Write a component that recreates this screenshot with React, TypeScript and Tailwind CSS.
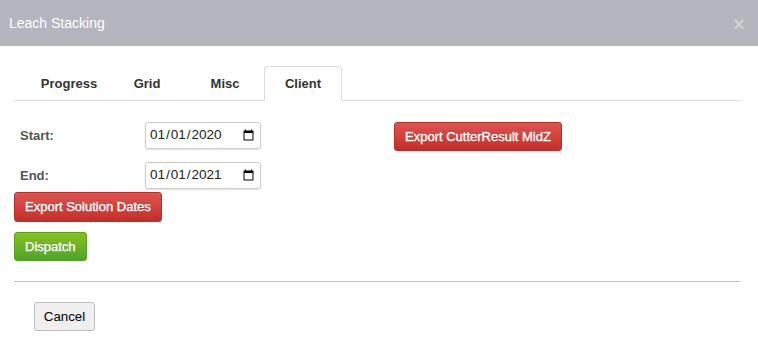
import { useState } from "react";

const tabs = ["Progress", "Grid", "Misc", "Client"];

export default function App() {
  const [active, setActive] = useState("Client");
  const [start, setStart] = useState("2020-01-01");
  const [end, setEnd] = useState("2021-01-01");

  return (
    <div className="w-[758px] h-[362px] bg-white font-['Liberation_Sans',Arial,sans-serif] text-[#333]">
      {/* header */}
      <div className="h-[46px] bg-[#b3b6bd] flex items-center justify-between pl-[9px] pr-[13px]">
        <span className="text-[14px] text-white">Leach Stacking</span>
        <span className="text-[20px] font-bold leading-none text-[#cdd0d5] mt-[2px]">×</span>
      </div>

      <div className="pl-[14px] pr-[18px]">
        {/* tabs */}
        <div className="flex pl-[16px] pt-[20px] border-b border-[#dcdcdc]">
          {tabs.map((t) => (
            <button
              key={t}
              onClick={() => setActive(t)}
              className={
                "w-[78px] h-[35px] -mb-px text-[13px] font-bold text-[#333] rounded-t-[4px] border " +
                (active === t
                  ? "bg-white border-[#dcdcdc] border-b-white"
                  : "border-transparent")
              }
            >
              {t}
            </button>
          ))}
        </div>

        {/* client form */}
        <div className="flex pt-[21px] h-[181px] border-b border-[#bdbdbd]">
          <div className="w-[380px]">
            <div className="flex items-center">
              <label className="w-[131px] pl-[6px] text-[13px] font-bold text-[#555]">Start:</label>
              <input
                type="date"
                value={start}
                onChange={(e) => setStart(e.target.value)}
                className="w-[116px] h-[27px] px-[3px] text-[13.5px] text-[#222] border border-[#ccc] rounded-[3px] shadow-[0_1px_2px_rgba(0,0,0,0.12)]"
              />
            </div>
            <div className="flex items-center mt-[13px]">
              <label className="w-[131px] pl-[6px] text-[13px] font-bold text-[#555]">End:</label>
              <input
                type="date"
                value={end}
                onChange={(e) => setEnd(e.target.value)}
                className="w-[116px] h-[27px] px-[3px] text-[13.5px] text-[#222] border border-[#ccc] rounded-[3px] shadow-[0_1px_2px_rgba(0,0,0,0.12)]"
              />
            </div>
            <button className="mt-[3px] h-[30px] px-[10px] text-[13px] text-white [-webkit-text-stroke:0.35px_white] [text-shadow:0_-1px_0_rgba(0,0,0,0.25)] rounded-[3px] border border-[#b92c28] bg-gradient-to-b from-[#dd5450] to-[#c52d29]">
              Export Solution Dates
            </button>
            <div>
              <button className="mt-[10px] h-[29px] px-[10px] text-[13px] text-white [-webkit-text-stroke:0.35px_white] [text-shadow:0_-1px_0_rgba(0,0,0,0.25)] rounded-[3px] border border-[#5aa21e] bg-gradient-to-b from-[#86c21c] to-[#4aa42a]">
                Dispatch
              </button>
            </div>
          </div>
          <div>
            <button className="h-[29px] px-[10px] text-[13px] text-white [-webkit-text-stroke:0.35px_white] [text-shadow:0_-1px_0_rgba(0,0,0,0.25)] rounded-[3px] border border-[#b92c28] bg-gradient-to-b from-[#dd5450] to-[#c52d29]">
              Export CutterResult MidZ
            </button>
          </div>
        </div>

        {/* footer */}
        <div className="pt-[20px] pl-[20px]">
          <button className="w-[61px] h-[29px] text-[13.33px] text-black bg-[#efefef] border border-[#bdbdbd] rounded-[3px]">
            Cancel
          </button>
        </div>
      </div>
    </div>
  );
}
